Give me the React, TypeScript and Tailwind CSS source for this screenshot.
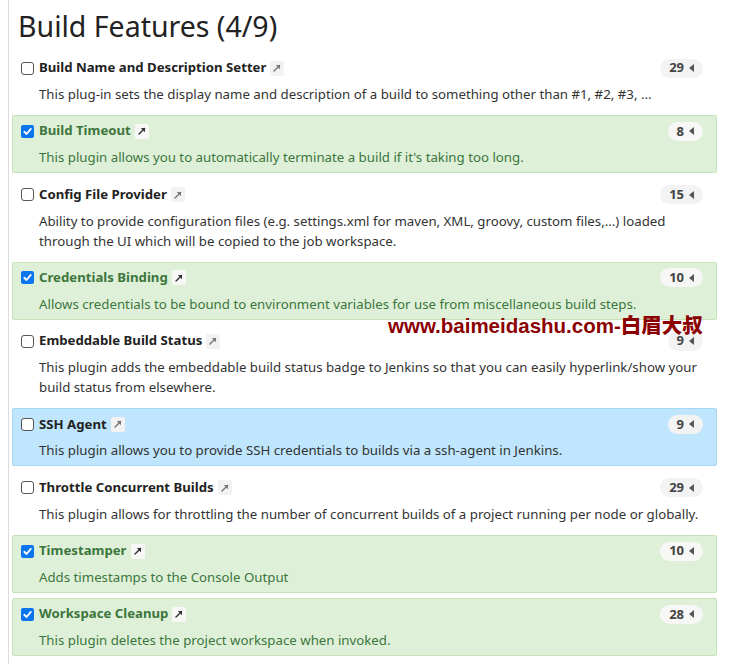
import React from "react";

type Item = {
  name: string;
  desc: string;
  count: string;
  state: "off" | "on" | "hover";
};

const items: Item[] = [
  { name: "Build Name and Description Setter", desc: "This plug-in sets the display name and description of a build to something other than #1, #2, #3, ...", count: "29", state: "off" },
  { name: "Build Timeout", desc: "This plugin allows you to automatically terminate a build if it's taking too long.", count: "8", state: "on" },
  { name: "Config File Provider", desc: "Ability to provide configuration files (e.g. settings.xml for maven, XML, groovy, custom files,...) loaded through the UI which will be copied to the job workspace.", count: "15", state: "off" },
  { name: "Credentials Binding", desc: "Allows credentials to be bound to environment variables for use from miscellaneous build steps.", count: "10", state: "on" },
  { name: "Embeddable Build Status", desc: "This plugin adds the embeddable build status badge to Jenkins so that you can easily hyperlink/show your build status from elsewhere.", count: "9", state: "off" },
  { name: "SSH Agent", desc: "This plugin allows you to provide SSH credentials to builds via a ssh-agent in Jenkins.", count: "9", state: "hover" },
  { name: "Throttle Concurrent Builds", desc: "This plugin allows for throttling the number of concurrent builds of a project running per node or globally.", count: "29", state: "off" },
  { name: "Timestamper", desc: "Adds timestamps to the Console Output", count: "10", state: "on" },
  { name: "Workspace Cleanup", desc: "This plugin deletes the project workspace when invoked.", count: "28", state: "on" },
];

function Check({ on }: { on: boolean }) {
  if (on) {
    return (
      <span className="flex h-[13px] w-[13px] shrink-0 items-center justify-center rounded-[2px] bg-[#0b74ef]">
        <svg width="11" height="11" viewBox="0 0 12 12">
          <path d="M2.5 6.3 L5 8.7 L9.6 3.2" fill="none" stroke="#fff" strokeWidth="2" strokeLinecap="round" strokeLinejoin="round" />
        </svg>
      </span>
    );
  }
  return <span className="h-[13px] w-[13px] shrink-0 rounded-[3px] border border-[#555] bg-white" />;
}

function LinkIcon({ on }: { on: boolean }) {
  return (
    <span className={`ml-[4px] flex h-[15px] w-[14px] items-center justify-center rounded-[2px] ${on ? "bg-[#f7f8f6]" : "bg-[#f2f2f2]"}`}>
      <svg width="10" height="10" viewBox="0 0 10 10">
        <path d="M2 8 L7.6 2.4" stroke={on ? "#333" : "#777"} strokeWidth="1.4" strokeLinecap="round" />
        <path d="M3.8 2 L8 2 L8 6.2 Z" fill={on ? "#333" : "#777"} />
      </svg>
    </span>
  );
}

function Badge({ count, on }: { count: string; on: boolean }) {
  return (
    <span className={`flex h-[19px] items-center gap-[5px] rounded-full px-[9px] text-[13px] font-bold text-[#444] ${on ? "bg-[#f7f8f6]" : "bg-[#f3f3f3]"}`}>
      <span>{count}</span>
      <svg width="5" height="8" viewBox="0 0 5 8">
        <path d="M5 0 L0 4 L5 8 Z" fill="#555" />
      </svg>
    </span>
  );
}

function Row({ item }: { item: Item }) {
  const on = item.state === "on";
  const box =
    item.state === "on"
      ? "border-[#c6e2b8] bg-[#dff0d8]"
      : item.state === "hover"
      ? "border-[#a6d8f5] bg-[#bfe6fc]"
      : "border-transparent bg-white";
  const titleColor = on ? "text-[#3c763d]" : "text-[#222]";
  const descColor = on ? "text-[#3c763d]" : "text-[#333]";
  return (
    <div className={`rounded-[2px] border py-[5px] pl-[8px] pr-[13px] ${box}`}>
      <div className="flex h-[20px] items-center">
        <Check on={on} />
        <span className={`ml-[5px] text-[13.2px] font-bold ${titleColor}`}>{item.name}</span>
        <LinkIcon on={on} />
        <span className="flex-1" />
        <Badge count={item.count} on={on} />
      </div>
      <div className={`mt-[6px] pl-[18px] text-[13.25px] leading-[20px] ${descColor}`}>{item.desc}</div>
    </div>
  );
}

export default function App() {
  return (
    <div className="relative min-h-[664px] w-[731px] bg-white" style={{ fontFamily: '"Segoe UI", "Noto Sans", "Open Sans", sans-serif' }}>
      <div className="ml-[8px] min-h-[664px] border-l border-[#dcdcdc] pl-[3px] pr-[14px]">
        <h1 className="pl-[6px] pt-[6px] text-[28.5px] font-normal leading-[40px] text-[#222]">Build Features (4/9)</h1>
        <div className="mt-[6px] flex flex-col gap-[5.3px]">
          {items.map((it) => (
            <Row key={it.name} item={it} />
          ))}
        </div>
      </div>
      <div
        className="absolute left-[388px] top-[314px] text-[20.5px] font-black leading-[24px] text-[#8b0000]"
        style={{ fontFamily: '"Liberation Sans", "Noto Sans CJK SC", sans-serif' }}
      >
        www.baimeidashu.com-白眉大叔
      </div>
    </div>
  );
}
